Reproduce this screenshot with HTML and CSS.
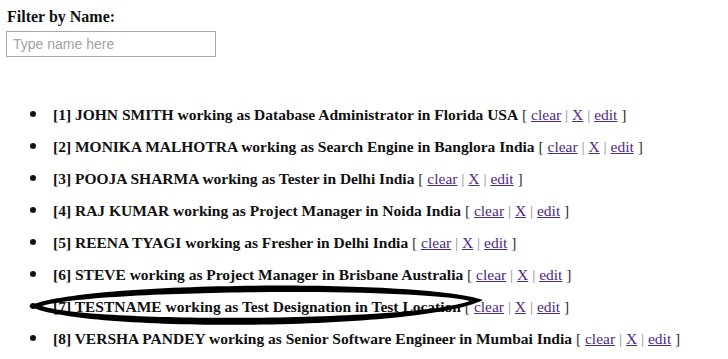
FILE: index.html
```html
<!DOCTYPE html>
<html>
<head>
<meta charset="utf-8">
<link rel="stylesheet" href="styles.css">
</head>
<body>
<div class="filter">
  <label class="filter-label">Filter by Name:</label>
  <input class="filter-input" type="text" placeholder="Type name here">
</div>
<div class="list-wrap">
<ul class="people">
  <li><b>[1] JOHN SMITH working as Database Administrator in Florida USA</b> <span class="br">[</span> <a href="#">clear</a> <span class="sep">|</span> <a href="#">X</a> <span class="sep">|</span> <a href="#">edit</a> <span class="br">]</span></li>
  <li><b>[2] MONIKA MALHOTRA working as Search Engine in Banglora India</b> <span class="br">[</span> <a href="#">clear</a> <span class="sep">|</span> <a href="#">X</a> <span class="sep">|</span> <a href="#">edit</a> <span class="br">]</span></li>
  <li><b>[3] POOJA SHARMA working as Tester in Delhi India</b> <span class="br">[</span> <a href="#">clear</a> <span class="sep">|</span> <a href="#">X</a> <span class="sep">|</span> <a href="#">edit</a> <span class="br">]</span></li>
  <li><b>[4] RAJ KUMAR working as Project Manager in Noida India</b> <span class="br">[</span> <a href="#">clear</a> <span class="sep">|</span> <a href="#">X</a> <span class="sep">|</span> <a href="#">edit</a> <span class="br">]</span></li>
  <li><b>[5] REENA TYAGI working as Fresher in Delhi India</b> <span class="br">[</span> <a href="#">clear</a> <span class="sep">|</span> <a href="#">X</a> <span class="sep">|</span> <a href="#">edit</a> <span class="br">]</span></li>
  <li><b>[6] STEVE working as Project Manager in Brisbane Australia</b> <span class="br">[</span> <a href="#">clear</a> <span class="sep">|</span> <a href="#">X</a> <span class="sep">|</span> <a href="#">edit</a> <span class="br">]</span></li>
  <li><b>[7] TESTNAME working as Test Designation in Test Location</b> <span class="br">[</span> <a href="#">clear</a> <span class="sep">|</span> <a href="#">X</a> <span class="sep">|</span> <a href="#">edit</a> <span class="br">]</span></li>
  <li><b>[8] VERSHA PANDEY working as Senior Software Engineer in Mumbai India</b> <span class="br">[</span> <a href="#">clear</a> <span class="sep">|</span> <a href="#">X</a> <span class="sep">|</span> <a href="#">edit</a> <span class="br">]</span></li>
</ul>
<svg class="mark" width="728" height="359" viewBox="0 0 728 359">
  <path fill="#000" fill-rule="evenodd" d="M29,306 C80,281 420,279 483,300 C420,331 80,333 29,306 Z M42,306 C92,290 410,287 470,301 C410,322 92,323 42,306 Z"/>
</svg>
</div>
</body>
</html>
```

FILE: styles.css
```css
html, body {
  margin: 0;
  padding: 0;
  background: #fff;
}
body {
  padding: 8px 6px 0 6px;
  font-family: "Liberation Serif", "Times New Roman", serif;
  font-size: 15.5px;
  color: #111;
  overflow: hidden;
  height: 351px;
}
.filter {
  display: flex;
  flex-direction: column;
  align-items: flex-start;
}
.filter-label {
  font-weight: bold;
  font-size: 16px;
  line-height: 18px;
  padding-left: 1px;
}
.filter-input {
  margin-top: 5px;
  box-sizing: border-box;
  width: 210px;
  height: 26px;
  border: 1px solid #a9a9a9;
  padding: 0 6px;
  font-family: "Liberation Sans", Arial, sans-serif;
  font-size: 14px;
  color: #333;
  outline: none;
}
.filter-input::placeholder {
  color: #a3a3a3;
}
.list-wrap {
  margin-top: 48px;
}
.people {
  margin: 0;
  padding: 0 0 0 23px;
  list-style: none;
}
.people li {
  height: 32px;
  line-height: 20px;
  white-space: nowrap;
}
.people li::before {
  content: "";
  display: inline-block;
  width: 6px;
  height: 6px;
  border-radius: 50%;
  background: #111;
  margin: 0 17px 0 1px;
  vertical-align: 3px;
}
.people b {
  color: #111;
}
.br {
  color: #333;
}
.sep {
  color: #8a8a8a;
}
.people a {
  color: #4e2a84;
  text-decoration: underline;
}
.mark {
  position: absolute;
  left: 0;
  top: 0;
  pointer-events: none;
}
```
